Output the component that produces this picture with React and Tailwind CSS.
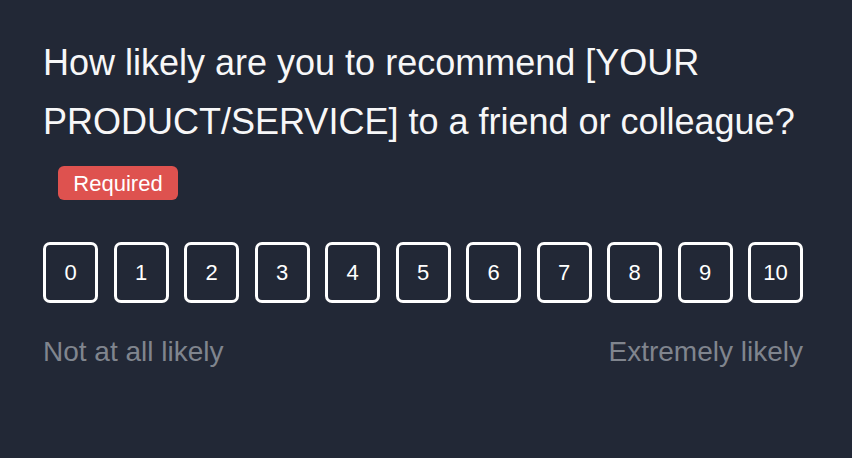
export default function App() {
  const nums = [0, 1, 2, 3, 4, 5, 6, 7, 8, 9, 10];
  return (
    <div
      className="w-[852px] h-[458px] bg-[#222836] pl-[43px] pt-[33px]"
      style={{ fontFamily: '"Liberation Sans", Arial, sans-serif' }}
    >
      <div className="w-[760px]">
        <h1 className="text-[36px] leading-[59px] text-[#f7f7f8] font-normal">
          How likely are you to recommend [YOUR PRODUCT/SERVICE] to a friend or colleague?
        </h1>
        <div className="mt-[15px] ml-[15px]">
          <span className="inline-flex items-center justify-center h-[34px] w-[120px] rounded-[6px] bg-[#de524f] text-white text-[22px]">
            Required
          </span>
        </div>
        <div className="mt-[42px] flex justify-between">
          {nums.map((n) => (
            <div
              key={n}
              className="w-[55px] h-[61px] border-[3px] border-white rounded-[7px] flex items-center justify-center text-white text-[22px]"
            >
              {n}
            </div>
          ))}
        </div>
        <div className="mt-[28px] flex justify-between text-[28px] text-[#80858e]">
          <span>Not at all likely</span>
          <span>Extremely likely</span>
        </div>
      </div>
    </div>
  );
}
